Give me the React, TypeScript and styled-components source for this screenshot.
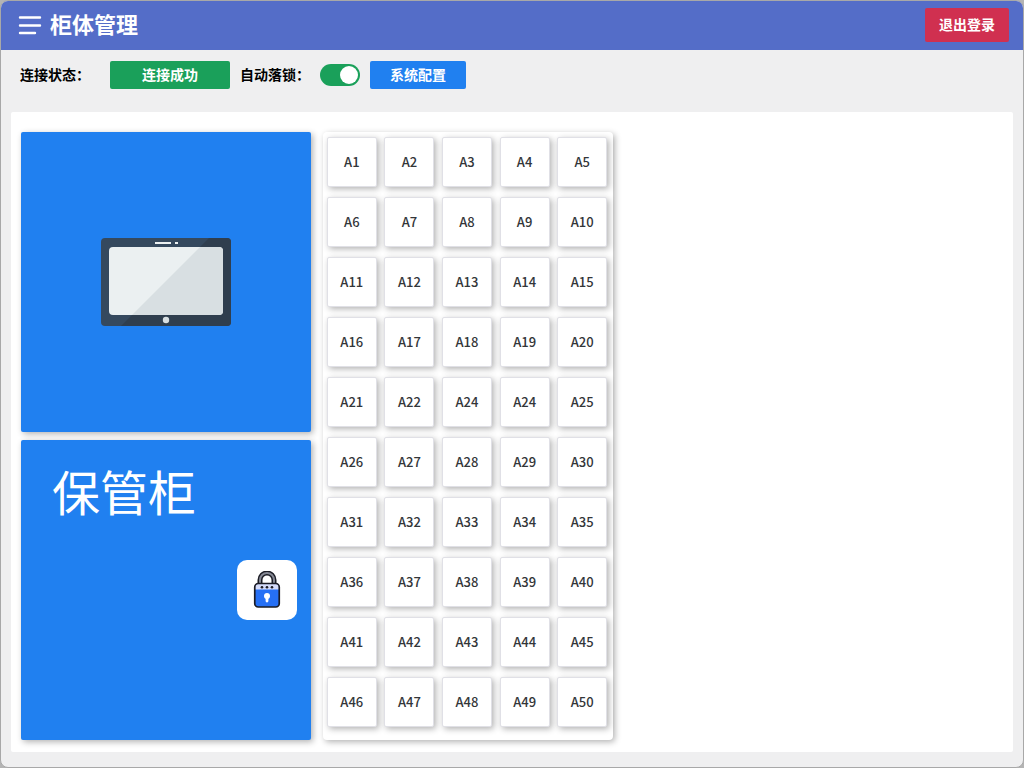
import React, { useState } from "react";
import styled, { createGlobalStyle } from "styled-components";

const GlobalStyle = createGlobalStyle`
  *, *::before, *::after { box-sizing: border-box; }
  body {
    margin: 0;
    background: #b4b4b4;
    font-family: "Noto Sans CJK SC", "Noto Sans", sans-serif;
    font-size: 14px;
    line-height: 20px;
    color: #000;
  }
  button, input { font-family: inherit; font-size: inherit; line-height: inherit; margin: 0; }
`;

const Window = styled.div`
  display: flex;
  flex-direction: column;
  min-height: 100vh;
  border: 1px solid #a8a8a8;
  border-radius: 8px;
  background: #efeff0;
  overflow: hidden;
`;

const Header = styled.header`
  display: flex;
  align-items: center;
  height: 49px;
  padding: 0 14px 2px 16px;
  background: #546dc8;
  color: #fff;
`;

const MenuButton = styled.button`
  display: flex;
  padding: 0;
  border: 0;
  background: none;
  color: inherit;
  cursor: pointer;
`;

const Title = styled.h1`
  flex: 1;
  margin: 0 0 0 7px;
  padding-bottom: 4px;
  font-size: 22px;
  line-height: 32px;
  font-weight: 700;
`;

const Button = styled.button<{ $color: string; $width: number; $height: number }>`
  width: ${(p) => p.$width}px;
  height: ${(p) => p.$height}px;
  padding: 0 0 2px;
  border: 0;
  border-radius: 2px;
  background: ${(p) => p.$color};
  color: #fff;
  font-weight: 700;
  cursor: pointer;
`;

const Toolbar = styled.div`
  display: flex;
  align-items: center;
  gap: 10px;
  height: 50px;
  padding: 0 19px;
`;

const Field = styled.div`
  display: flex;
  align-items: center;
`;

const Label = styled.label<{ $width: number }>`
  width: ${(p) => p.$width}px;
  padding-bottom: 2px;
  font-weight: 700;
  white-space: nowrap;
`;

const Status = styled.output`
  width: 120px;
  height: 28px;
  border-radius: 2px;
  background: #1aa05a;
  color: #fff;
  font-weight: 700;
  line-height: 26px;
  text-align: center;
`;

const Switch = styled.input`
  display: flex;
  align-items: center;
  appearance: none;
  width: 40px;
  height: 22px;
  padding: 0 2px;
  border-radius: 11px;
  background: #b8bcc2;
  cursor: pointer;

  &::before {
    content: "";
    width: 18px;
    height: 18px;
    border-radius: 50%;
    background: #fff;
  }

  &:checked {
    justify-content: flex-end;
    background: #1aa05a;
  }
`;

const Content = styled.main`
  display: flex;
  align-items: flex-start;
  flex: 1;
  gap: 12px;
  margin: 12px 10px 15px;
  padding: 20px 10px 12px;
  border-radius: 2px;
  background: #fff;
`;

const Cabinet = styled.section`
  display: flex;
  flex-direction: column;
  gap: 8px;
`;

const CabinetDoor = styled.div`
  display: flex;
  width: 290px;
  height: 300px;
  border-radius: 2px;
  background: #2080f0;
  box-shadow: 2px 2px 6px rgba(0, 0, 0, 0.3);
`;

const ScreenDoor = styled(CabinetDoor)`
  align-items: center;
  justify-content: center;
`;

const NameDoor = styled(CabinetDoor)`
  flex-direction: column;
  justify-content: space-between;
  padding: 14px 14px 120px 31px;
  color: #fff;
`;

const CabinetName = styled.h2`
  margin: 0;
  font-size: 48px;
  line-height: 72px;
  font-weight: 400;
`;

const LockButton = styled.button`
  display: flex;
  align-items: center;
  justify-content: center;
  align-self: flex-end;
  width: 60px;
  height: 60px;
  padding: 0;
  border: 0;
  border-radius: 10px;
  background: #fff;
  cursor: pointer;
`;

const LockerGrid = styled.section`
  display: grid;
  grid-template-columns: repeat(5, 1fr);
  grid-auto-rows: 60px;
  align-items: center;
  justify-items: center;
  width: 290px;
  min-height: 608px;
  padding-right: 2px;
  border-radius: 4px;
  background: #fff;
  box-shadow: 2px 2px 6px rgba(0, 0, 0, 0.3);
`;

const Locker = styled.button`
  width: 50px;
  height: 50px;
  padding: 0;
  border: 1px solid #e0e0e6;
  border-radius: 2px;
  background: #fff;
  color: #333639;
  font-size: 13px;
  font-weight: 500;
  box-shadow: 2px 2px 6px rgba(0, 0, 0, 0.3);
  cursor: pointer;
`;

const lockers = Array.from({ length: 50 }, (_, i) => (i === 22 ? "A24" : `A${i + 1}`));

const MenuIcon = () => (
  <svg width="26" height="22" viewBox="0 0 26 22" fill="none" stroke="#fff" strokeWidth="2.4" strokeLinecap="round" aria-hidden="true">
    <path d="M3 3.500H23M3 11.500H23M3 19H18" />
  </svg>
);

const TabletIcon = () => (
  <svg width="130" height="88" viewBox="0 0 130 88" aria-hidden="true">
    <defs>
      <clipPath id="tablet-body"><rect width="130" height="88" rx="4" /></clipPath>
      <clipPath id="tablet-screen"><rect x="8" y="9" width="114" height="68" rx="4" /></clipPath>
    </defs>
    <g clipPath="url(#tablet-body)">
      <rect width="130" height="88" fill="#35495e" />
      <path d="M108 0H130V88H20Z" fill="#2f3e4e" />
    </g>
    <g clipPath="url(#tablet-screen)">
      <rect x="8" y="9" width="114" height="68" fill="#ebf0f1" />
      <path d="M108 0H130V88H20Z" fill="#d8dfe2" />
    </g>
    <rect x="54" y="4" width="16" height="2" fill="#ebf0f1" />
    <rect x="74" y="4" width="3" height="2" fill="#ebf0f1" />
    <circle cx="65" cy="82" r="3.2" fill="#d8dfe2" />
  </svg>
);

const LockIcon = () => (
  <svg width="28" height="38" viewBox="0 0 28 38" fill="none" aria-hidden="true">
    <path d="M7 13V9a7 7 0 0 1 14 0v4" stroke="#1b1c25" strokeWidth="5" />
    <path d="M7 13V9a7 7 0 0 1 14 0v4" stroke="#858894" strokeWidth="2" />
    <rect x="1.750" y="12.500" width="24.500" height="23.500" rx="3.500" fill="#2670f5" />
    <path d="M2 18.500v-2.500a3.500 3.500 0 0 1 3.500-3.500h17a3.500 3.500 0 0 1 3.500 3.500v2.500z" fill="#d5dcfb" />
    <rect x="1.750" y="12.500" width="24.500" height="23.500" rx="3.500" stroke="#1b1c25" strokeWidth="1.700" />
    <g fill="#1b1c25">
      <circle cx="9" cy="16.200" r="1.300" />
      <circle cx="14" cy="16.200" r="1.300" />
      <circle cx="19" cy="16.200" r="1.300" />
    </g>
    <circle cx="14" cy="25" r="3" fill="#fff" />
    <path d="M12.600 25.500h2.800v4.500a1.400 1.400 0 0 1-2.800 0z" fill="#fff" />
  </svg>
);

export default function App() {
  const [autoLock, setAutoLock] = useState(true);

  return (
    <>
      <GlobalStyle />
      <Window>
        <Header>
          <MenuButton type="button" aria-label="菜单">
            <MenuIcon />
          </MenuButton>
          <Title>柜体管理</Title>
          <Button type="button" $color="#d03050" $width={84} $height={34}>退出登录</Button>
        </Header>
        <Toolbar>
          <Field>
            <Label $width={90} htmlFor="status">连接状态：</Label>
            <Status id="status">连接成功</Status>
          </Field>
          <Field>
            <Label $width={80} htmlFor="auto-lock">自动落锁：</Label>
            <Switch
              id="auto-lock"
              type="checkbox"
              checked={autoLock}
              onChange={(e) => setAutoLock(e.target.checked)}
            />
          </Field>
          <Button type="button" $color="#2080f0" $width={96} $height={28}>系统配置</Button>
        </Toolbar>
        <Content>
          <Cabinet>
            <ScreenDoor>
              <TabletIcon />
            </ScreenDoor>
            <NameDoor>
              <CabinetName>保管柜</CabinetName>
              <LockButton type="button" aria-label="开锁">
                <LockIcon />
              </LockButton>
            </NameDoor>
          </Cabinet>
          <LockerGrid>
            {lockers.map((name, i) => (
              <Locker key={i} type="button">{name}</Locker>
            ))}
          </LockerGrid>
        </Content>
      </Window>
    </>
  );
}
